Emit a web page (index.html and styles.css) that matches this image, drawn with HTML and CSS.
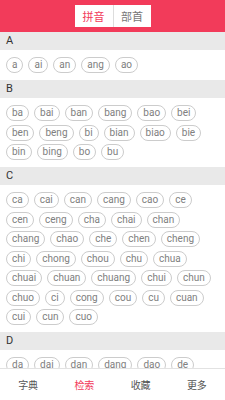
FILE: index.html
```html
<!DOCTYPE html>
<html lang="zh">
<head>
<meta charset="utf-8">
<title>检索</title>
<link rel="stylesheet" href="styles.css">
</head>
<body>
<div class="app">
  <header class="topbar">
    <div class="seg">
      <span class="seg-item active">拼音</span>
      <span class="seg-item">部首</span>
    </div>
  </header>
  <main class="content">
    <div class="sec-head">A</div>
    <div class="chips">
      <span class="chip">a</span><span class="chip">ai</span><span class="chip">an</span><span class="chip">ang</span><span class="chip">ao</span>
    </div>
    <div class="sec-head">B</div>
    <div class="chips">
      <span class="chip">ba</span><span class="chip">bai</span><span class="chip">ban</span><span class="chip">bang</span><span class="chip">bao</span><span class="chip">bei</span>
      <span class="chip">ben</span><span class="chip">beng</span><span class="chip">bi</span><span class="chip">bian</span><span class="chip">biao</span><span class="chip">bie</span>
      <span class="chip">bin</span><span class="chip">bing</span><span class="chip">bo</span><span class="chip">bu</span>
    </div>
    <div class="sec-head">C</div>
    <div class="chips">
      <span class="chip">ca</span><span class="chip">cai</span><span class="chip">can</span><span class="chip">cang</span><span class="chip">cao</span><span class="chip">ce</span>
      <span class="chip">cen</span><span class="chip">ceng</span><span class="chip">cha</span><span class="chip">chai</span><span class="chip">chan</span>
      <span class="chip">chang</span><span class="chip">chao</span><span class="chip">che</span><span class="chip">chen</span><span class="chip">cheng</span>
      <span class="chip">chi</span><span class="chip">chong</span><span class="chip">chou</span><span class="chip">chu</span><span class="chip">chua</span>
      <span class="chip">chuai</span><span class="chip">chuan</span><span class="chip">chuang</span><span class="chip">chui</span><span class="chip">chun</span>
      <span class="chip">chuo</span><span class="chip">ci</span><span class="chip">cong</span><span class="chip">cou</span><span class="chip">cu</span><span class="chip">cuan</span>
      <span class="chip">cui</span><span class="chip">cun</span><span class="chip">cuo</span>
    </div>
    <div class="sec-head">D</div>
    <div class="chips">
      <span class="chip">da</span><span class="chip">dai</span><span class="chip">dan</span><span class="chip">dang</span><span class="chip">dao</span><span class="chip">de</span>
    </div>
  </main>
  <nav class="tabbar">
    <span class="tab">字典</span>
    <span class="tab active">检索</span>
    <span class="tab">收藏</span>
    <span class="tab">更多</span>
  </nav>
</div>
</body>
</html>
```
FILE: styles.css
```css
html, body {
  margin: 0;
  padding: 0;
  overflow: hidden;
}
body {
  font-family: Roboto, "Noto Sans CJK SC", sans-serif;
  background: #fff;
}
.app {
  height: 100vh;
  display: flex;
  flex-direction: column;
}
.topbar {
  flex: 0 0 32px;
  background: #f23b5a;
  display: flex;
  align-items: center;
  justify-content: center;
}
.seg {
  display: flex;
  background: #fff;
  height: 22px;
}
.seg-item {
  width: 38px;
  display: flex;
  align-items: center;
  justify-content: center;
  font-size: 11px;
  color: #777;
  font-family: "Noto Sans CJK SC", sans-serif;
}
.seg-item + .seg-item {
  border-left: 1px solid #ddd;
  width: 37px;
}
.seg-item.active {
  color: #f23b5a;
}
.content {
  flex: 1 1 auto;
  overflow: hidden;
}
.sec-head {
  height: 18px;
  line-height: 18px;
  background: #e9e9e9;
  color: #333;
  font-size: 11px;
  padding-left: 6px;
}
.chips {
  display: flex;
  flex-wrap: wrap;
  gap: 3.5px 5px;
  padding: 7px 14px 7px 6px;
}
.chip {
  box-sizing: border-box;
  height: 16px;
  padding: 0 5px;
  border: 1px solid #cccccc;
  border-radius: 8px;
  font-size: 10px;
  line-height: 14px;
  color: #808080;
}
.tabbar {
  flex: 0 0 32px;
  box-sizing: border-box;
  border-top: 1px solid #e2e2e2;
  background: #fff;
  display: grid;
  grid-template-columns: repeat(4, 1fr);
  align-items: center;
}
.tab {
  text-align: center;
  font-size: 10px;
  color: #555;
  font-family: "Noto Sans CJK SC", sans-serif;
}
.tab.active {
  color: #f23b5a;
}
```
